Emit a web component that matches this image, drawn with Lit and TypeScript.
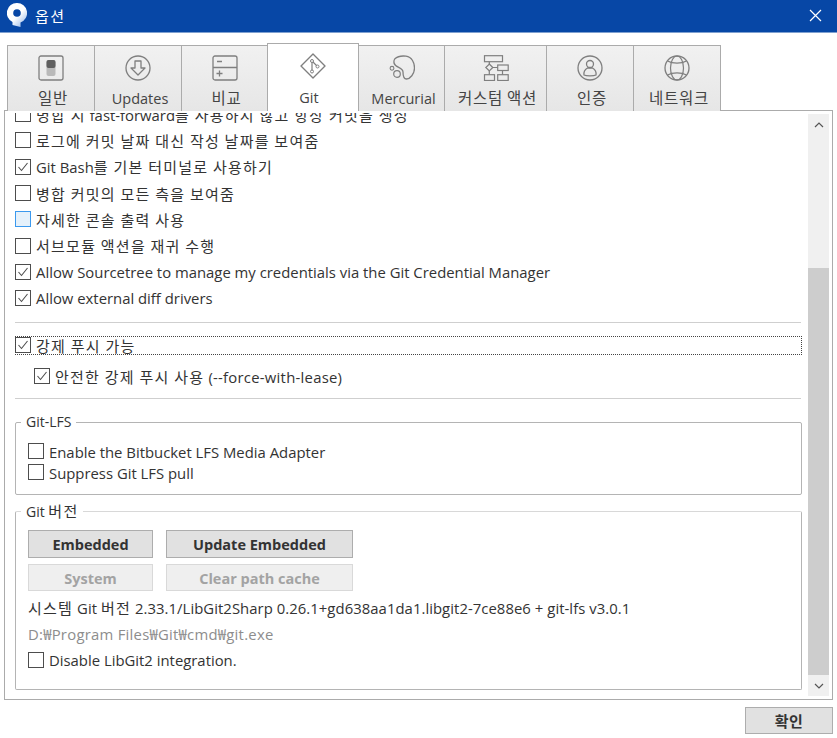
import { LitElement, html, css, svg } from "lit";
import { customElement } from "lit/decorators.js";

const icons: Record<string, any> = {
  general: svg`<rect x="1" y="1" width="24" height="24" rx="2" fill="none" stroke="#7f7f7f" stroke-width="1.3"/><rect x="8.500" y="5" width="9" height="16" rx="2" fill="#b9b9b9"/><rect x="8.500" y="5" width="9" height="8" rx="2" fill="#5f5f5f"/>`,
  updates: svg`<circle cx="13" cy="13" r="12" fill="none" stroke="#7f7f7f" stroke-width="1.3"/><path d="M10 6h6v7h4l-7 7-7-7h4z" fill="none" stroke="#7f7f7f" stroke-width="1.3" stroke-linejoin="round"/>`,
  compare: svg`<rect x="1" y="1" width="24" height="24" rx="2" fill="none" stroke="#7f7f7f" stroke-width="1.3"/><path d="M1 12.500h24M5 6.500h5M4.500 18.500h6M7.500 15.500v6" fill="none" stroke="#7f7f7f" stroke-width="1.3"/>`,
  git: svg`<path d="M13 1 25 13 13 25 1 13z" fill="none" stroke="#7f7f7f" stroke-width="1.4" stroke-linejoin="round"/><path d="M12 7v12M12 8l6 6" fill="none" stroke="#7f7f7f" stroke-width="1.2"/><circle cx="12" cy="8" r="1.500" fill="#fff" stroke="#7f7f7f"/><circle cx="12" cy="18.500" r="1.500" fill="#fff" stroke="#7f7f7f"/><circle cx="17.500" cy="13.500" r="1.500" fill="#fff" stroke="#7f7f7f"/>`,
  hg: svg`<path d="M5.700 4C9 1 14 .8 17 1.200 23 2 25.500 8 25.500 13 25.500 19 21 24 17.500 24 14 24 14 20 14 17 14 12 6 13 5 8 4.800 6.500 5 5 5.700 4z" fill="none" stroke="#7f7f7f" stroke-width="1.3"/><circle cx="8" cy="19" r="3.300" fill="none" stroke="#7f7f7f" stroke-width="1.2"/><circle cx="3" cy="13.300" r="1.900" fill="none" stroke="#7f7f7f" stroke-width="1.1"/>`,
  custom: svg`<rect x="1.500" y=".7" width="18" height="6" fill="none" stroke="#7f7f7f" stroke-width="1.2"/><rect x="14.700" y="10" width="10.500" height="5.500" fill="none" stroke="#7f7f7f" stroke-width="1.2"/><rect x="1.500" y="19.700" width="10" height="5.800" fill="none" stroke="#7f7f7f" stroke-width="1.2"/><rect x="14.700" y="19.700" width="10.500" height="5.800" fill="none" stroke="#7f7f7f" stroke-width="1.2"/><path d="M6.300 6.700v2.300M6.300 16v3.700M9.800 12.500h4.900M19.500 15.500v4.200" fill="none" stroke="#7f7f7f" stroke-width="1.2"/><path d="M6.300 9l3.500 3.500-3.500 3.500-3.500-3.500z" fill="none" stroke="#7f7f7f" stroke-width="1.2"/>`,
  auth: svg`<circle cx="13" cy="13" r="12" fill="none" stroke="#7f7f7f" stroke-width="1.3"/><circle cx="13" cy="9" r="3.500" fill="none" stroke="#7f7f7f" stroke-width="1.3"/><path d="M7 20c-.5-3 1-5.500 3.500-7h5c2.500 1.500 4 4 3.500 7-2 1.200-10 1.200-12 0z" fill="none" stroke="#7f7f7f" stroke-width="1.3"/>`,
  net: svg`<circle cx="13" cy="13" r="12" fill="none" stroke="#7f7f7f" stroke-width="1.3"/><ellipse cx="13" cy="13" rx="6.500" ry="12" fill="none" stroke="#7f7f7f" stroke-width="1.2"/><path d="M3.500 6c5 2.800 14 2.800 19 0M3.500 20c5-2.800 14-2.800 19 0" fill="none" stroke="#7f7f7f" stroke-width="1.2"/>`,
};

const tabs = [
  { label: "일반", icon: "general", w: 88 },
  { label: "Updates", icon: "updates", w: 88 },
  { label: "비교", icon: "compare", w: 87 },
  { label: "Git", icon: "git", w: 92, active: true },
  { label: "Mercurial", icon: "hg", w: 87 },
  { label: "커스텀 액션", icon: "custom", w: 103 },
  { label: "인증", icon: "auth", w: 88 },
  { label: "네트워크", icon: "net", w: 88 },
];

/* Korean runs are spaced wider than the Latin text around them. */
const runs = (s: string) =>
  s.split(/([가-힣][가-힣 ]*[가-힣]|[가-힣])/).map((p, i) => (i % 2 ? html`<span class="ko">${p}</span>` : p));

@customElement("app-root")
export class AppRoot extends LitElement {
  static styles = css`
    :host { display: block; width: 837px; height: 738px; background: #fff; overflow: hidden;
      font-family: "Open Sans", "Noto Sans CJK KR", sans-serif; font-size: 14px; color: #333; }
    * { box-sizing: border-box; }
    .ko { font-family: "Noto Sans CJK KR", sans-serif; font-size: 15px; letter-spacing: 1.25px; font-weight: 400; white-space: pre; }
    .title { height: 33px; background: #0747a6; border-bottom: 1px solid #7fa0d0; display: flex; align-items: center; color: #fff; padding: 0 15px 2px 7px; }
    .logo { width: 20px; height: 24px; margin-right: 8px; flex: none; }
    .title .name { flex: 1; }
    .title .ko { font-size: 15px; letter-spacing: 1.5px; }
    .close { width: 13px; height: 13px; }
    .tabs { display: flex; height: 68px; margin-top: 10px; padding-left: 7px; align-items: flex-end; position: relative; z-index: 1; }
    .tab { height: 66px; background: linear-gradient(#f1f1f1, #e6e6e6); border: 1px solid #ababab; border-bottom: none; margin-right: -1px; display: flex; flex-direction: column; align-items: center; flex: none; padding-top: 9px; }
    .tab svg { width: 26px; height: 26px; flex: none; }
    .tab .lab { margin-top: 8px; padding-left: 4px; font-size: 14.500px; color: #444; line-height: 20px; white-space: nowrap; }
    .tab .ko { font-size: 15.500px; letter-spacing: .7px; vertical-align: 2px; line-height: 16px; }
    .tab.active { height: 68px; background: #fff; position: relative; z-index: 1; }
    .tab.active .lab { margin-top: 9px; padding-left: 0; padding-right: 8px; }
    .panel { margin: -1px 4px 0; height: 590px; border: 1px solid #ababab; display: flex; position: relative; }
    .scroller { flex: 1; overflow: hidden; margin: 2px 0; padding: 0 5px 0 10px; min-width: 0; }
    .content { margin-top: -12px; }
    .row { display: flex; align-items: center; height: 26.300px; white-space: nowrap; font-size: 14.860px; }
    .cb { width: 16px; height: 16px; border: 1px solid #4d4d4d; margin: 0 5px 0 0; flex: none; display: flex; background: #fff; }
    .cb svg { width: 14px; height: 14px; }
    .cb.hover { border-color: #3b99ee; background: #e5f1fb; }
    .sep { height: 1px; background: #cfcfcf; margin-right: 2px; }
    .s1 { margin-top: 10.500px; }
    .s2 { margin-top: 8.700px; }
    .focus { outline: 1px dotted #444; outline-offset: -1px; height: 19px; width: 787px; margin-top: 13px; }
    .indent { padding-left: 19px; margin-top: 8px; letter-spacing: .25px; }
    .group { border: 1px solid #b4b4b4; border-radius: 2px; position: relative; width: 787px; padding: 18px 12px 0; }
    .lfs { margin-top: 23px; height: 73px; }
    .lfs .row { height: 21px; }
    .lfs .row span:last-child { padding-top: 2px; }
    .ver { margin-top: 16px; height: 179px; border-top-color: #d8d8d8; }
    .legend { position: absolute; top: -11px; left: 5px; background: #fff; padding: 0 5px; line-height: 20px; font-size: 14px; }
    .btns { display: grid; grid-template-columns: 125px 187px; column-gap: 13px; row-gap: 6px; }
    .btn { height: 28px; padding-top: 2px; background: #e1e1e1; border: 1px solid #adadad; display: flex; align-items: center; justify-content: center; font-weight: 700; font-size: 14.500px; color: #333; }
    .btn.off { background: #efefef; border-color: #d9d9d9; color: #a3a3a3; height: 27px; }
    .txt { white-space: nowrap; font-size: 14.860px; line-height: 20px; }
    .t1 { margin-top: 7.500px; letter-spacing: .05px; }
    .grey { color: #8d8d8d; margin-top: 6px; letter-spacing: .25px; }
    .ver .row { margin-top: 3.500px; height: 24px; }
    .bar { width: 21px; flex: none; margin: 3px 3px 3px 0; background: #f0f0f0; display: flex; flex-direction: column; }
    .arrow { height: 21px; display: flex; align-items: center; justify-content: center; flex: none; }
    .arrow svg { width: 10px; height: 6px; }
    .track { flex: 1; display: flex; flex-direction: column; }
    .thumb { background: #cdcdcd; margin-top: 133px; height: 407px; }
    .footer { display: flex; justify-content: flex-end; padding: 7px 4px 0 0; }
    .ok { width: 88px; height: 27px; background: #e1e1e1; border: 1px solid #adadad; display: flex; align-items: center; justify-content: center; color: #333; }
    .ok .ko { font-weight: 700; letter-spacing: .5px; }
  `;

  cb(checked = false, cls = "") {
    return html`<span class="cb ${cls}">${checked ? html`<svg viewBox="0 0 14 14"><path d="M2.500 7l3 3.500 6-7.500" fill="none" stroke="#4d4d4d" stroke-width="1.100"/></svg>` : ""}</span>`;
  }

  row(label: string, checked = false, cls = "") {
    return html`<div class="row">${this.cb(checked, cls)}<span>${runs(label)}</span></div>`;
  }

  render() {
    return html`
      <div class="title">
        <svg class="logo" viewBox="0 0 20 24"><defs><linearGradient id="lg" x1="0.3" y1="0.3" x2="0.9" y2="1"><stop offset="0.35" stop-color="#fff"/><stop offset="1" stop-color="#8fb4e8"/></linearGradient></defs><path d="M10 0a10 10 0 0 1 3.500 19.400V24L5.500 22V19A10 10 0 0 1 10 0z" fill="url(#lg)"/><circle cx="10" cy="10" r="3.800" fill="#0747a6"/></svg>
        <span class="name">${runs("옵션")}</span>
        <svg class="close" viewBox="0 0 13 13"><path d="M1 1l11 11M12 1L1 12" stroke="#fff" stroke-width="1.200" fill="none"/></svg>
      </div>
      <div class="tabs">
        ${tabs.map((t) => html`<div class="tab ${t.active ? "active" : ""}" style="width:${t.w}px"><svg viewBox="0 0 26 26">${icons[t.icon]}</svg><span class="lab">${runs(t.label)}</span></div>`)}
      </div>
      <div class="panel">
        <div class="scroller"><div class="content">
          ${this.row("병합 시 fast-forward를 사용하지 않고 항상 커밋을 생성")}
          ${this.row("로그에 커밋 날짜 대신 작성 날짜를 보여줌")}
          ${this.row("Git Bash를 기본 터미널로 사용하기", true)}
          ${this.row("병합 커밋의 모든 측을 보여줌")}
          ${this.row("자세한 콘솔 출력 사용", false, "hover")}
          ${this.row("서브모듈 액션을 재귀 수행")}
          ${this.row("Allow Sourcetree to manage my credentials via the Git Credential Manager", true)}
          ${this.row("Allow external diff drivers", true)}
          <div class="sep s1"></div>
          <div class="focus row">${this.cb(true)}<span>${runs("강제 푸시 가능")}</span></div>
          <div class="row indent">${this.cb(true)}<span>${runs("안전한 강제 푸시 사용 (--force-with-lease)")}</span></div>
          <div class="sep s2"></div>
          <div class="group lfs">
            <div class="legend">Git-LFS</div>
            ${this.row("Enable the Bitbucket LFS Media Adapter")}
            ${this.row("Suppress Git LFS pull")}
          </div>
          <div class="group ver">
            <div class="legend">${runs("Git 버전")}</div>
            <div class="btns">
              <div class="btn">Embedded</div><div class="btn">Update Embedded</div>
              <div class="btn off">System</div><div class="btn off">Clear path cache</div>
            </div>
            <div class="txt t1">${runs("시스템 Git 버전 2.33.1/LibGit2Sharp 0.26.1+gd638aa1da1.libgit2-7ce88e6 + git-lfs v3.0.1")}</div>
            <div class="txt grey">D:₩Program Files₩Git₩cmd₩git.exe</div>
            ${this.row("Disable LibGit2 integration.")}
          </div>
        </div></div>
        <div class="bar">
          <div class="arrow"><svg viewBox="0 0 10 6"><path d="M1 5l4-4 4 4" fill="none" stroke="#555" stroke-width="1.200"/></svg></div>
          <div class="track"><div class="thumb"></div></div>
          <div class="arrow"><svg viewBox="0 0 10 6"><path d="M1 1l4 4 4-4" fill="none" stroke="#555" stroke-width="1.200"/></svg></div>
        </div>
      </div>
      <div class="footer"><div class="ok">${runs("확인")}</div></div>
    `;
  }
}
